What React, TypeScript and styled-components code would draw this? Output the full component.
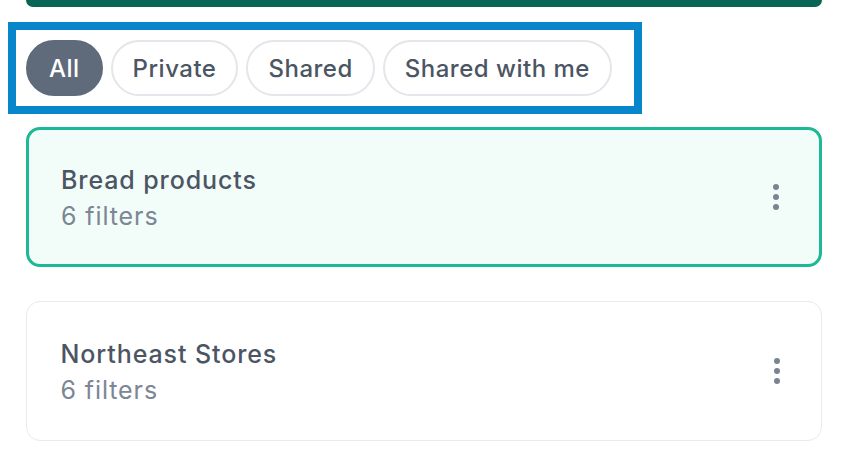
import React from 'react';
import styled, { createGlobalStyle } from 'styled-components';

const GlobalStyle = createGlobalStyle`
    html, body {
        margin: 0;
        padding: 0;
        background: #ffffff;
        font-family: 'Inter', 'Noto Sans', sans-serif;
    }
`;

const Page = styled.div`
    display: flex;
    flex-direction: column;
    align-items: flex-start;
    width: 844px;
    height: 470px;
    box-sizing: border-box;
    padding: 0 22px 0 8px;
    overflow: hidden;
`;

const TopBar = styled.div`
    align-self: stretch;
    margin-left: 18px;
    height: 7px;
    background: #066555;
    border-radius: 0 0 10px 10px;
`;

const Highlight = styled.div`
    display: inline-flex;
    margin-top: 15px;
    padding: 10px 22px 10px 10px;
    border: 8px solid #0786cc;
`;

const ChipRow = styled.div`
    display: flex;
    gap: 8px;
`;

const Chip = styled.button<{ $active?: boolean }>`
    height: 56px;
    box-sizing: border-box;
    padding: 0 ${(p) => (p.$active ? '21px' : '20px')};
    border-radius: 28px;
    border: 2px solid ${(p) => (p.$active ? '#5f6b7a' : '#e3e6ea')};
    background: ${(p) => (p.$active ? '#5f6b7a' : '#ffffff')};
    color: ${(p) => (p.$active ? '#ffffff' : '#4b5563')};
    font-family: inherit;
    font-size: 24px;
    letter-spacing: 0.5px;
    font-weight: 500;
    cursor: pointer;
`;

const CardList = styled.div`
    align-self: stretch;
    margin-left: 18px;
    margin-top: 13px;
    display: flex;
    flex-direction: column;
    gap: 34px;
`;

const Card = styled.div<{ $selected?: boolean }>`
    height: 140px;
    box-sizing: border-box;
    display: flex;
    align-items: center;
    justify-content: space-between;
    padding: ${(p) => (p.$selected ? '2px 35px 0 32px' : '2px 36.5px 0 33.5px')};
    border: ${(p) => (p.$selected ? '3px solid #1db895' : '1.5px solid #e9eaee')};
    background: ${(p) => (p.$selected ? '#f2fdf9' : '#ffffff')};
    border-radius: 14px;
`;

const CardText = styled.div`
    display: flex;
    flex-direction: column;
`;

const Title = styled.div`
    font-size: 25px;
    letter-spacing: 0.9px;
    line-height: 36px;
    font-weight: 500;
    color: #4b5563;
`;

const Subtitle = styled.div`
    font-size: 25px;
    letter-spacing: 0.9px;
    line-height: 36px;
    font-weight: 400;
    color: #7c8694;
`;

const MenuButton = styled.button`
    display: flex;
    flex-direction: column;
    align-items: center;
    gap: 4px;
    margin-top: -2px;
    padding: 0;
    width: 16px;
    border: none;
    background: transparent;
    cursor: pointer;
`;

const Dot = styled.span`
    width: 6px;
    height: 6px;
    border-radius: 50%;
    background: #7b8390;
`;

const filters = ['All', 'Private', 'Shared', 'Shared with me'];

const views = [
    { name: 'Bread products', count: 6, selected: true },
    { name: 'Northeast Stores', count: 6, selected: false },
];

const App: React.FC = () => {
    return (
        <>
            <GlobalStyle />
            <Page>
                <TopBar />
                <Highlight>
                    <ChipRow>
                        {filters.map((f) => (
                            <Chip key={f} $active={f === 'All'}>
                                {f}
                            </Chip>
                        ))}
                    </ChipRow>
                </Highlight>
                <CardList>
                    {views.map((v) => (
                        <Card key={v.name} $selected={v.selected}>
                            <CardText>
                                <Title>{v.name}</Title>
                                <Subtitle>{v.count} filters</Subtitle>
                            </CardText>
                            <MenuButton aria-label="More">
                                <Dot />
                                <Dot />
                                <Dot />
                            </MenuButton>
                        </Card>
                    ))}
                </CardList>
            </Page>
        </>
    );
};

export default App;
